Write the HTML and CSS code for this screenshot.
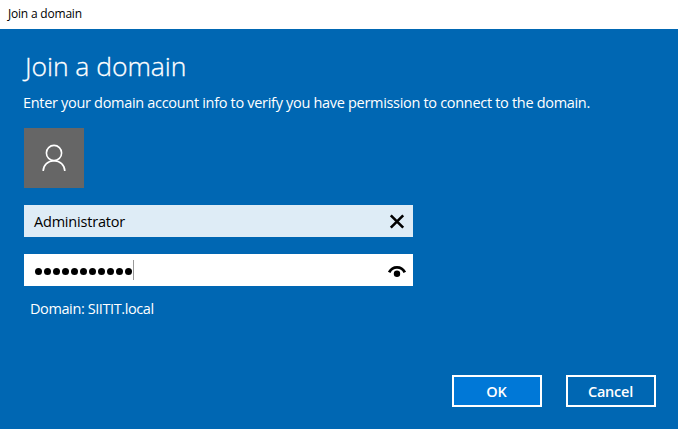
FILE: index.html
```html
<!DOCTYPE html>
<html lang="en">
<head>
<meta charset="utf-8">
<title>Join a domain</title>
<link rel="stylesheet" href="styles.css">
</head>
<body>
<header class="titlebar"><span>Join a domain</span></header>
<main class="dialog">
  <h1>Join a domain</h1>
  <p class="intro">Enter your domain account info to verify you have permission to connect to the domain.</p>
  <div class="avatar">
    <svg width="60" height="60" viewBox="0 0 60 60" fill="none" stroke="#fff" stroke-width="1.6"><circle cx="30" cy="25" r="7.6"/><path d="M19.2 43C19.3 37 24 32.7 30 32.7S40.7 37 40.8 43"/></svg>
  </div>
  <div class="field user"><span class="value">Administrator</span>
    <svg width="16" height="16" viewBox="0 0 16 16" stroke="#000" stroke-width="2.6"><path d="M1.8 2.3L14.2 14.7M14.2 2.3L1.8 14.7"/></svg>
  </div>
  <div class="field pass">
    <div class="dots"><i></i><i></i><i></i><i></i><i></i><i></i><i></i><i></i><i></i><i></i><i></i><b class="caret"></b></div>
    <svg width="18" height="14" viewBox="0 0 18 14"><path d="M1.2 9.3C3 5.9 5.7 4.4 9 4.4S15 5.9 16.8 9.3" fill="none" stroke="#000" stroke-width="2.8"/><circle cx="9" cy="10.7" r="3.2"/></svg>
  </div>
  <p class="domain">Domain: SIITIT.local</p>
  <div class="actions"><button class="ok"><span>OK</span></button><button><span>Cancel</span></button></div>
</main>
</body>
</html>
```
FILE: styles.css
```css
* { box-sizing: border-box; }
body { margin: 0; width: 679px; height: 429px; overflow: hidden; background: #fff; font-family: "Open Sans", "Noto Sans", sans-serif; color: #fff; }
.titlebar { height: 29px; padding-left: 8px; color: #000; font-size: 12px; line-height: 28px; letter-spacing: -0.2px; }
.dialog { width: 678px; height: 400px; padding: 20px 22px 0 24px; background: #0067b3; display: flex; flex-direction: column; align-items: flex-start; }
h1 { margin: -1px 0 0 1px; height: 37px; line-height: 36px; font-size: 26.5px; font-weight: 300; -webkit-text-stroke: 0.3px #fff; letter-spacing: -0.05px; white-space: nowrap; }
.intro { margin: 8px 0 0 -1px; height: 20px; line-height: 20px; font-size: 14.5px; letter-spacing: -0.31px; white-space: nowrap; }
.avatar { margin-top: 15px; width: 60px; height: 60px; background: #666; }
.avatar svg, .field svg { display: block; }
.field { width: 389px; height: 32px; padding: 0 8px 0 10px; display: flex; align-items: center; justify-content: space-between; color: #000; font-size: 14.5px; letter-spacing: -0.2px; }
.user { margin-top: 17px; background: #deecf6; }
.pass { margin-top: 17px; background: #fff; padding-right: 7px; }
.dots { display: flex; align-items: center; gap: 2px; padding-left: 1px; }
.dots i { width: 7px; height: 7px; border-radius: 50%; background: #000; margin-top: 3px; }
.caret { width: 1px; height: 20px; background: #999; margin-left: -1px; }
.domain { margin: 13px 0 0 6px; height: 20px; line-height: 20px; font-size: 14.5px; letter-spacing: -0.4px; }
.actions { align-self: flex-end; margin-top: 56px; display: flex; gap: 24px; }
button { width: 90px; height: 32px; padding: 1px 1px 0 0; border: 2px solid #fff; background: #0067b3; color: #fff; font: 600 14.5px/28px "Open Sans", "Noto Sans", sans-serif; letter-spacing: -0.2px; }
.ok { background: #0078d7; }
```
